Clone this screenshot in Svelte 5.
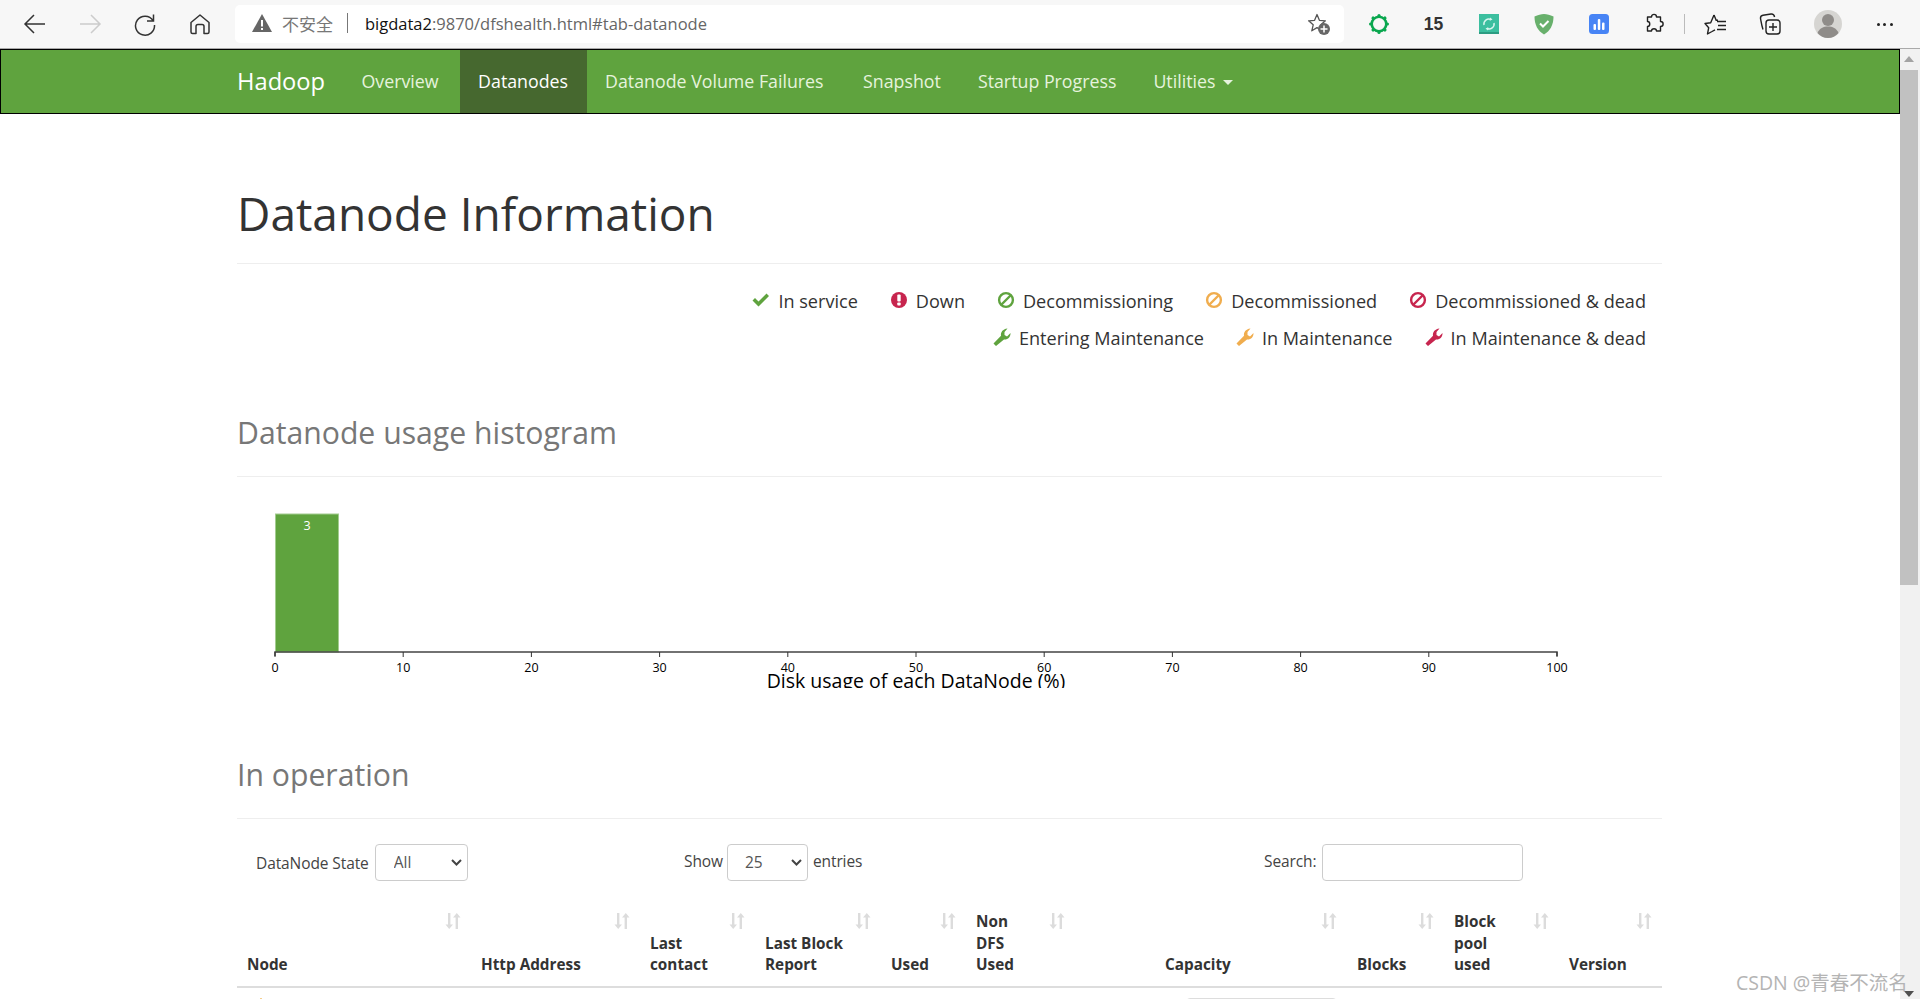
<script>
  const ticks = [0, 10, 20, 30, 40, 50, 60, 70, 80, 90, 100];
  const columns = [
    { w: 234, lines: ['Node'], sort: 10 },
    { w: 169, lines: ['Http Address'], sort: 10 },
    { w: 115, lines: ['Last', 'contact'], sort: 10 },
    { w: 126, lines: ['Last Block', 'Report'], sort: 10 },
    { w: 85, lines: ['Used'], sort: 10 },
    { w: 189, lines: ['Non', 'DFS', 'Used'], sort: 90 },
    { w: 192, lines: ['Capacity'], sort: 10 },
    { w: 97, lines: ['Blocks'], sort: 10 },
    { w: 115, lines: ['Block', 'pool', 'used'], sort: 10 },
    { w: 103, lines: ['Version'], sort: 10 }
  ];
  const legend = [
    [
      { icon: 'ok', color: '#5fa33e', label: 'In service' },
      { icon: 'down', color: '#c7254e', label: 'Down' },
      { icon: 'ban', color: '#5fa33e', label: 'Decommissioning' },
      { icon: 'ban', color: '#f0ad4e', label: 'Decommissioned' },
      { icon: 'ban', color: '#c7254e', label: 'Decommissioned & dead' }
    ],
    [
      { icon: 'wrench', color: '#5fa33e', label: 'Entering Maintenance' },
      { icon: 'wrench', color: '#f0ad4e', label: 'In Maintenance' },
      { icon: 'wrench', color: '#c7254e', label: 'In Maintenance & dead' }
    ]
  ];
  const nav = ['Overview', 'Datanodes', 'Datanode Volume Failures', 'Snapshot', 'Startup Progress'];
  const bumps = [0, 45, 90, 135, 180, 225, 270, 315];
</script>

<div class="window">
  <header class="chrome">
    <div class="tool">
      <svg width="24" height="24" viewBox="0 0 24 24" fill="none" stroke="#333" stroke-width="1.5"><path d="M22 12H2M11 3l-9 9 9 9" /></svg>
    </div>
    <div class="tool">
      <svg width="24" height="24" viewBox="0 0 24 24" fill="none" stroke="#ccc" stroke-width="1.5"><path d="M2 12h20M13 3l9 9-9 9" /></svg>
    </div>
    <div class="tool">
      <svg width="24" height="24" viewBox="0 0 24 24" fill="none" stroke="#333" stroke-width="1.5"><path d="M20 8.5A9.5 9.5 0 1 0 21.5 13M20.500 2.500v6.500h-6.500" /></svg>
    </div>
    <div class="tool">
      <svg width="24" height="24" viewBox="0 0 24 24" fill="none" stroke="#333" stroke-width="1.5" stroke-linejoin="round"><path d="M3 10.500 12 3l9 7.500V20a1.500 1.500 0 0 1-1.500 1.500H16v-7a2 2 0 0 0-2-2h-4a2 2 0 0 0-2 2v7H4.500A1.500 1.500 0 0 1 3 20z" /></svg>
    </div>
    <div class="address">
      <svg class="warn" width="20" height="18" viewBox="0 0 20 18"><path d="M10 0 20 18H0z" fill="#666" /><rect x="9" y="6" width="2" height="6.500" fill="#fff" /><rect x="9" y="14" width="2" height="2" fill="#fff" /></svg>
      <span class="insecure">不安全</span>
      <span class="sep"></span>
      <span class="url"><b>bigdata2</b>:9870/dfshealth.html#tab-datanode</span>
      <svg class="addfav" width="24" height="24" viewBox="0 0 24 24">
        <path d="M10 2.500l2.400 5.800 6 .5-4.600 4 1.400 6-5.200-3.200-5.200 3.200 1.400-6-4.600-4 6-.5z" fill="none" stroke="#555" stroke-width="1.300" stroke-linejoin="round" />
        <circle cx="17" cy="17" r="6" fill="#666" />
        <path d="M17 13.500v7M13.500 17h7" stroke="#fff" stroke-width="1.500" />
      </svg>
    </div>
    <div class="tool first-ext">
      <svg width="24" height="24" viewBox="0 0 24 24">
        <circle cx="12" cy="12" r="7.300" fill="none" stroke="#0aa74f" stroke-width="2.600" />
        <g fill="#0aa74f">
          {#each bumps as a}
            <circle cx="12" cy="3.600" r="1.600" transform="rotate({a} 12 12)" />
          {/each}
        </g>
      </svg>
    </div>
    <div class="tool count">15</div>
    <div class="tool">
      <svg width="20" height="20" viewBox="0 0 20 20">
        <rect width="20" height="20" fill="#3cbf9f" /><rect y="18" width="20" height="2" fill="#2c9c82" />
        <path d="M5 11a5 5 0 0 1 7-5.500M15 9a5 5 0 0 1-7 5.500" fill="none" stroke="#d8f5ee" stroke-width="1.500" />
        <path d="M11 3.500l2.500 2-2.800 1.300zM9 16.500l-2.500-2 2.800-1.300z" fill="#d8f5ee" />
      </svg>
    </div>
    <div class="tool">
      <svg width="20" height="22" viewBox="0 0 20 22">
        <path d="M10 1c3 0 6 1 9.500 2.500C19.500 12 16 18 10 21.500 4 18 .5 12 .5 3.500 4 2 7 1 10 1z" fill="#68b06c" />
        <path d="M6 10.500l3 3 5.500-5.500" fill="none" stroke="#fff" stroke-width="2" />
      </svg>
    </div>
    <div class="tool">
      <svg width="20" height="20" viewBox="0 0 20 20">
        <rect width="20" height="20" rx="3.500" fill="#4784f5" />
        <rect x="4.500" y="10" width="2.500" height="6" rx="1" fill="#fff" /><rect x="8.800" y="5" width="2.500" height="11" rx="1" fill="#fff" /><rect x="13" y="8.500" width="2.500" height="7.500" rx="1" fill="#fff" />
      </svg>
    </div>
    <div class="tool">
      <svg width="22" height="22" viewBox="0 0 22 22" fill="none" stroke="#222" stroke-width="1.400" stroke-linejoin="round">
        <path d="M8 4.500c0-3.500 5-3.500 5 0h4v4.500c3.500 0 3.500 5 0 5v4.500h-4c0-3-5-3-5 0H4v-4.500c3 0 3-5 0-5V4.500z" transform="translate(.5 -.5)" />
      </svg>
    </div>
    <span class="toolsep"></span>
    <div class="tool fav">
      <svg width="24" height="24" viewBox="0 0 24 24" fill="none" stroke="#222" stroke-width="1.400" stroke-linejoin="round">
        <path d="M10 3l2.200 5.300H14M8 19.500l-4.500 2.500 1.200-6.300L1 11.500l5.700-.8L10 3M8 19.500l3-1.700M12.200 8.300h-.7" />
        <path d="M13 9.500h9M14 13.500h8M13 17.500h9" />
      </svg>
    </div>
    <div class="tool coll">
      <svg width="24" height="24" viewBox="0 0 24 24" fill="none" stroke="#222" stroke-width="1.400" stroke-linejoin="round">
        <rect x="8" y="8" width="14" height="14" rx="3" /><path d="M15 11v8M11 15h8" />
        <path d="M5 17.500C3.500 13 3 9 2.500 6.500 2.300 4.500 3.500 3.500 5 3.200L13 2c2-.2 3.200.8 3.600 3" />
      </svg>
    </div>
    <div class="tool avatar">
      <svg width="30" height="30" viewBox="0 0 30 30">
        <circle cx="15" cy="15" r="14" fill="#d6d5d2" />
        <circle cx="15" cy="11" r="6" fill="#8f8c89" />
        <path d="M4.500 24c2-5 6-6.500 10.500-6.500S23.500 19 25.500 24A14 14 0 0 1 15 29 14 14 0 0 1 4.500 24z" fill="#8f8c89" />
      </svg>
    </div>
    <div class="tool dots"><i></i><i></i><i></i></div>
  </header>

  <div class="viewport">
    <main class="page">
      <nav class="navbar">
        <div class="navin">
          <span class="brand">Hadoop</span>
          {#each nav as item}
            <span class="navitem" class:active={item === 'Datanodes'} class:nudge={item === 'Datanodes' || item === 'Snapshot'}>{item}</span>
          {/each}
          <span class="navitem">Utilities <i class="caret"></i></span>
        </div>
      </nav>

      <div class="container">
        <h1 class="title">Datanode Information</h1>

        <div class="legend">
          {#each legend as row}
            <div class="legendrow">
              {#each row as item}
                <span class="legenditem">
                  <svg class="gly" width="18" height="18" viewBox="0 0 18 18" style="color:{item.color}">
                    {#if item.icon === 'ok'}
                      <path d="M.5 9.500 3 7l3.500 3.500L14.500 2.500 17 5 6.500 15.500z" fill="currentColor" />
                    {:else if item.icon === 'down'}
                      <circle cx="9" cy="9" r="8" fill="currentColor" /><rect x="7.300" y="3.500" width="3.400" height="7" rx="1" fill="#fff" /><rect x="7.300" y="11.500" width="3.400" height="3" rx=".8" fill="#fff" />
                    {:else if item.icon === 'ban'}
                      <circle cx="9" cy="9" r="6.900" fill="none" stroke="currentColor" stroke-width="2.400" /><path d="M4.500 13.500l9-9" stroke="currentColor" stroke-width="2.400" />
                    {:else}
                      <path d="M.5 15.500 8 7.800C7.500 4.500 9.500 1 14.500.5L11.500 4v3l2.500 1.500 3.500-3.500c.3 4-3 7-6.500 6.500L3 18z" fill="currentColor" />
                    {/if}
                  </svg>
                  <span>{item.label}</span>
                </span>
              {/each}
            </div>
          {/each}
        </div>

        <h2 class="subtitle first">Datanode usage histogram</h2>

        <svg class="chart" width="1425" height="187" viewBox="0 0 1425 187">
          <rect x="38.500" y="13" width="63" height="138" fill="#5fa33e" stroke="#a3cc90" stroke-width="1" />
          <text x="70" y="29" class="barlabel">3</text>
          <path d="M38 155V151H1320V155" fill="none" stroke="#444" stroke-width="1.500" />
          {#each ticks as t, i}
            <line x1={38 + i * 128.2} x2={38 + i * 128.2} y1="151" y2="156" stroke="#333" />
            <text x={38 + i * 128.2} y="170.500" class="tick">{t}</text>
          {/each}
          <text x="679" y="187" class="axislabel">Disk usage of each DataNode (%)</text>
        </svg>

        <h2 class="subtitle second">In operation</h2>

        <div class="controls">
          <label class="state">DataNode State
            <select class="field"><option>All</option></select>
          </label>
          <label class="show">Show
            <select class="field small"><option>25</option></select>
            entries
          </label>
          <label class="search">Search:
            <input class="field wide" type="text" />
          </label>
        </div>

        <table class="grid">
          <colgroup>
            {#each columns as c}<col style="width:{c.w}px" />{/each}
          </colgroup>
          <thead>
            <tr>
              {#each columns as c}
                <th>
                  {#each c.lines as line}<div>{line}</div>{/each}
                  <svg class="sort" style="right:{c.sort}px" width="16" height="18" viewBox="0 0 16 18" fill="#dcdcdc">
                    <path d="M3 1h2.400v11.500H8L4.200 17 .5 12.500H3zM10.600 17V5.500H8L11.800 1l3.700 4.500H13V17z" />
                  </svg>
                </th>
              {/each}
            </tr>
          </thead>
          <tbody>
            <tr>
              <td colspan="6"><i class="tinydot"></i></td>
              <td colspan="4"><div class="progress"><div class="fill"></div></div></td>
            </tr>
          </tbody>
        </table>
      </div>
    </main>

    <aside class="scrollbar">
      <i class="up"></i>
      <div class="thumb"></div>
      <i class="down"></i>
    </aside>

    <div class="watermark">CSDN @青春不流名</div>
  </div>
</div>

<style>
  :global(body) {
    margin: 0;
    background: #fff;
    overflow: hidden;
  }
  .window {
    width: 1920px;
    height: 999px;
    overflow: hidden;
    display: flex;
    flex-direction: column;
    font-family: "Open Sans", "Noto Sans CJK SC", sans-serif;
    color: #333;
  }
  .chrome {
    height: 48px;
    flex: none;
    display: flex;
    align-items: center;
    padding-left: 7px;
    background: #f7f7f7;
    border-bottom: 1px solid #aaa;
  }
  .tool {
    width: 55px;
    flex: none;
    display: flex;
    justify-content: center;
    align-items: center;
  }
  .address {
    width: 1109px;
    height: 38px;
    margin-left: 8px;
    flex: none;
    display: flex;
    align-items: center;
    background: #fff;
    border-radius: 5px;
    box-sizing: border-box;
    padding-left: 17px;
    padding-right: 13px;
    padding-bottom: 2px;
    font-size: 16.500px;
    color: #666;
  }
  .insecure {
    margin-left: 10px;
    color: #777;
    font-size: 17px;
  }
  .sep {
    width: 1px;
    height: 20px;
    background: #777;
    margin: 0 17px 0 14px;
  }
  .url b {
    font-weight: 400;
    color: #111;
  }
  .addfav {
    margin-left: auto;
    margin-top: 2px;
  }
  .first-ext {
    margin-left: 7px;
  }
  .count {
    font: 700 17.500px "Liberation Sans", sans-serif;
    color: #333;
  }
  .toolsep {
    width: 1px;
    height: 20px;
    background: #bbb;
    margin: 0 3px 0 3px;
    flex: none;
  }
  .coll {
    margin-left: -1px;
  }
  .avatar {
    margin-left: 3px;
  }
  .dots {
    gap: 3.500px;
    margin-left: 2px;
  }
  .dots i {
    width: 3px;
    height: 3px;
    border-radius: 50%;
    background: #222;
  }
  .viewport {
    flex: 1;
    min-height: 0;
    display: flex;
    position: relative;
  }
  .page {
    flex: 1;
    min-width: 0;
    overflow: hidden;
  }
  .navbar {
    height: 65px;
    box-sizing: border-box;
    background: #5fa33e;
    border: 1px solid #000;
  }
  .navin {
    width: 1425px;
    margin-left: 236px;
    height: 100%;
    display: flex;
    align-items: stretch;
    font-size: 17.800px;
    color: #e6f3dd;
  }
  .brand {
    display: flex;
    align-items: center;
    font-size: 23.700px;
    color: #fff;
    width: 106px;
    padding-bottom: 2px;
    box-sizing: border-box;
  }
  .navitem {
    display: flex;
    align-items: center;
    padding: 0 18.500px 2px;
    gap: 8px;
  }
  .navitem.nudge {
    margin-left: 2.500px;
  }
  .navitem.active {
    background: #46682f;
    color: #fff;
  }
  .caret {
    width: 0;
    height: 0;
    border-left: 5px solid transparent;
    border-right: 5px solid transparent;
    border-top: 5px solid #e6f3dd;
    margin-top: 3px;
  }
  .container {
    width: 1425px;
    margin-left: 237px;
  }
  .title {
    margin: 0;
    height: 150px;
    box-sizing: border-box;
    border-bottom: 1px solid #eee;
    padding-top: 68px;
    font-size: 46px;
    line-height: 62px;
    font-weight: 400;
    color: #333;
  }
  .legend {
    padding: 18.500px 16px 0 0;
    display: flex;
    flex-direction: column;
    gap: 0;
    font-size: 18.100px;
    line-height: 37px;
  }
  .legendrow {
    display: flex;
    justify-content: flex-end;
    gap: 32px;
  }
  .legenditem {
    display: inline-flex;
    align-items: center;
    gap: 8px;
  }
  .gly {
    flex: none;
    margin-top: -3px;
  }
  .subtitle {
    margin: 0;
    box-sizing: border-box;
    border-bottom: 1px solid #eee;
    font-size: 30.200px;
    line-height: 40px;
    font-weight: 400;
    color: #777;
  }
  .subtitle.first {
    margin-top: 39px;
    height: 81px;
    padding-top: 17px;
  }
  .subtitle.second {
    margin-top: 0;
    height: 131px;
    padding-top: 67px;
  }
  .chart {
    display: block;
    margin-top: 24px;
    overflow: hidden;
  }
  .barlabel {
    fill: #fff;
    font-size: 12.500px;
    text-anchor: middle;
  }
  .tick {
    fill: #000;
    font-size: 12.500px;
    text-anchor: middle;
  }
  .axislabel {
    fill: #000;
    font-size: 19.500px;
    text-anchor: middle;
  }
  .controls {
    position: relative;
    height: 37px;
    margin-top: 25px;
    display: grid;
    grid-template-columns: 447px 551px 1fr;
    align-items: center;
    font-size: 15.500px;
    letter-spacing: -0.100px;
    color: #444;
  }
  .controls label {
    display: flex;
    align-items: center;
    gap: 5px;
  }
  .controls .state {
    padding-left: 19px;
    gap: 6px;
    padding-top: 1px;
  }
  .controls .state select {
    margin-top: -1px;
    margin-left: 0;
  }
  .show {
    margin-top: -2px;
  }
  .search {
    margin-top: -2px;
    margin-left: 29px;
  }
  .controls .search {
    gap: 6px;
  }
  .field {
    height: 37px;
    box-sizing: border-box;
    border: 1px solid #ccc;
    border-radius: 4px;
    background: #fff;
    font: inherit;
    color: #555;
    width: 93px;
    padding: 0 0 0 18px;
  }
  select.field {
    appearance: none;
    background-image: url("data:image/svg+xml,%3Csvg xmlns='http://www.w3.org/2000/svg' width='11' height='7' viewBox='0 0 11 7'%3E%3Cpath d='M1 1l4.500 4.500L10 1' fill='none' stroke='%23444' stroke-width='2'/%3E%3C/svg%3E");
    background-repeat: no-repeat;
    background-position: right 5px center;
  }
  .field.small {
    width: 81px;
    margin-top: 2px;
    margin-left: -1px;
    padding-left: 17px;
  }
  .field.wide {
    width: 201px;
    margin-top: 2px;
  }
  .grid {
    table-layout: fixed;
    width: 1425px;
    border-collapse: collapse;
    margin-top: 27px;
  }
  .grid th {
    position: relative;
    vertical-align: bottom;
    text-align: left;
    padding: 0 10px 10px;
    border-bottom: 2px solid #ddd;
    height: 68px;
    font-size: 15.300px;
    line-height: 21.500px;
    font-weight: 700;
    color: #333;
  }
  .sort {
    position: absolute;
    top: 4px;
  }
  .grid td {
    padding: 10px 10px;
    height: 40px;
    vertical-align: top;
  }
  .tinydot {
    display: block;
    width: 2px;
    height: 2px;
    background: #f5cf8f;
    margin-left: 13px;
  }
  .progress {
    width: 149px;
    height: 26px;
    margin-left: 21px;
    background: #f5f5f5;
    border: 1px solid #ddd;
    border-radius: 4px;
    overflow: hidden;
  }
  .fill {
    width: 4px;
    height: 100%;
    background: #5fa33e;
  }
  .scrollbar {
    width: 20px;
    flex: none;
    background: #f1f1f1;
    position: relative;
  }
  .thumb {
    position: absolute;
    top: 21px;
    left: 0;
    width: 18px;
    height: 515px;
    background: #c1c1c1;
  }
  .up, .down {
    position: absolute;
    left: 4px;
    width: 0;
    height: 0;
    border-left: 5px solid transparent;
    border-right: 5px solid transparent;
  }
  .up {
    top: 7px;
    border-bottom: 6px solid #a3a3a3;
  }
  .down {
    bottom: 2px;
    border-top: 6px solid #505050;
  }
  .watermark {
    position: absolute;
    left: 1736px;
    top: 918px;
    font-size: 19.500px;
    color: #b4b4b4;
    white-space: nowrap;
  }
</style>
